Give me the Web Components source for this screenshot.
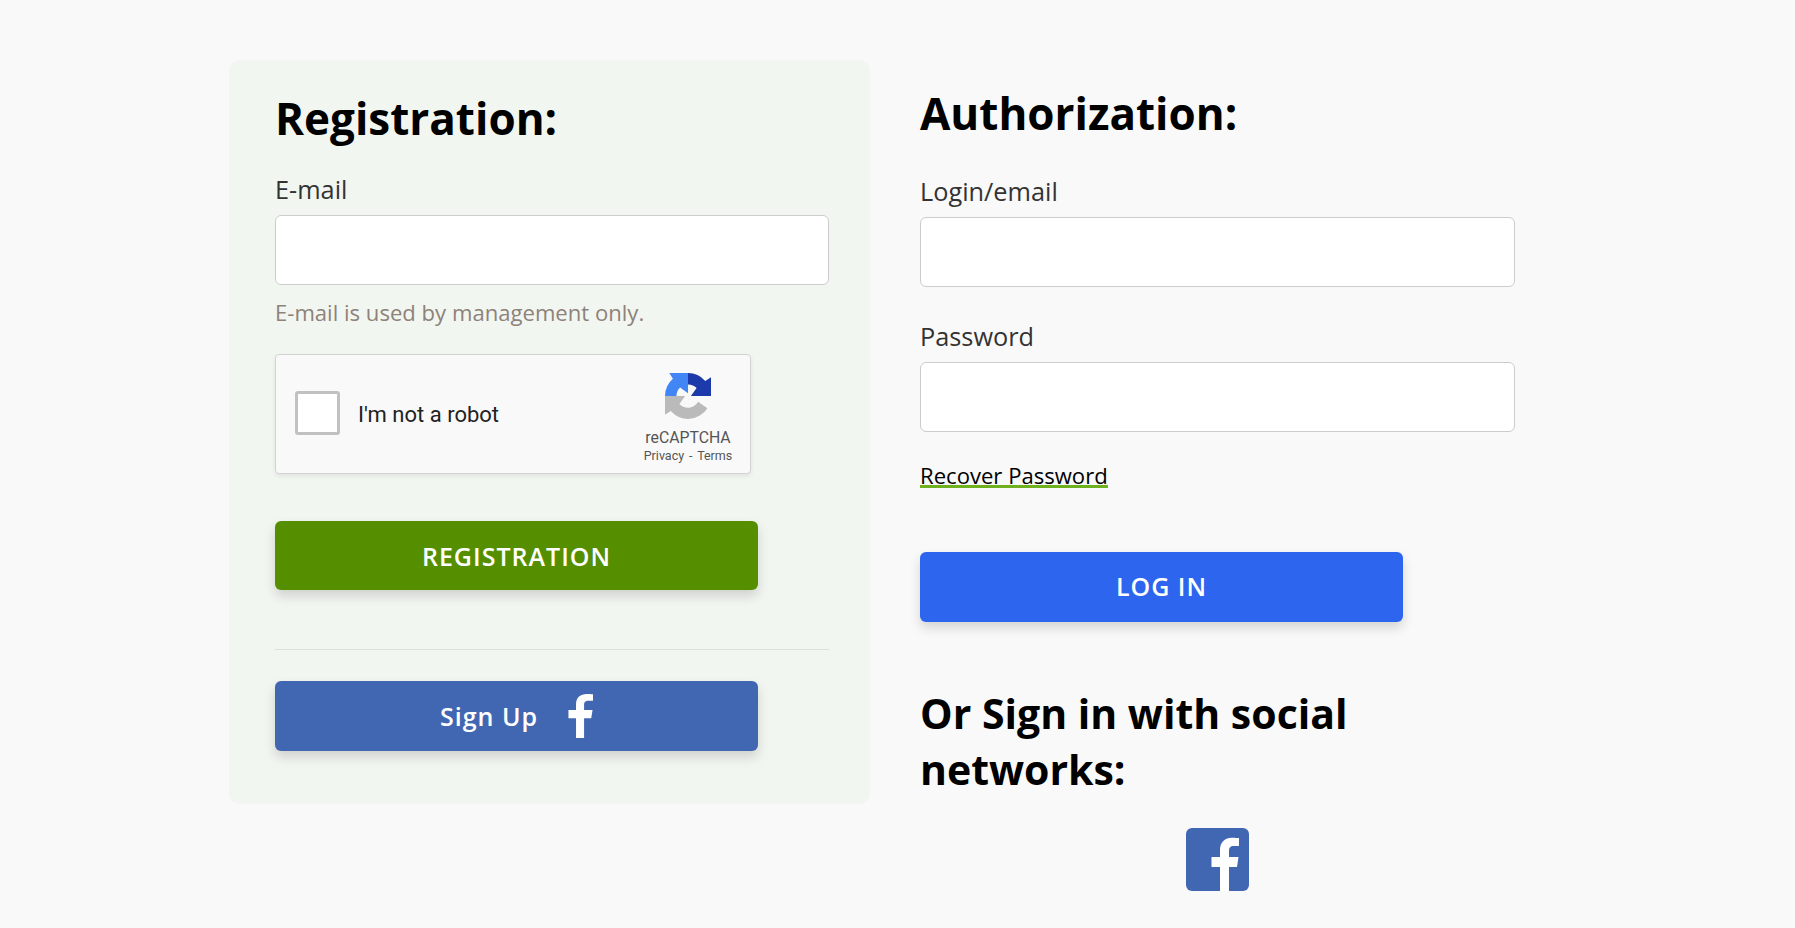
<!DOCTYPE html>
<html>
<head>
<meta charset="utf-8">
<title>Registration</title>
<style>
    html, body { margin: 0; height: 100%; }
    body { background: #f9f9f9; font-family: "Open Sans", sans-serif; overflow: hidden; }
    .reg-head { margin-top: 30px; }
    .reg-mail { margin-top: 26px; }
    .reg-captcha { margin-top: 26px; }
    .reg-send { margin-top: 47px; --nudge: 0px; }
    .reg-fb { margin-top: 31px; }
    .log-head { margin-top: 25px; }
    .log-mail { margin-top: 33px; }
    .log-pass { margin-top: 32px; }
    .log-recover { margin-top: 33px; }
    .log-send { margin-top: 63px; --nudge: 2px; }
    .log-social { margin-top: 63px; font-size: 41px; }
    .log-icons { margin-top: 31px; }
</style>
</head>
<body>

<auth-page>
    <auth-panel slot="left" tinted>
        <form-title class="reg-head">Registration:</form-title>
        <form-field class="reg-mail" label="E-mail" type="email" hint="E-mail is used by management only."></form-field>
        <re-captcha class="reg-captcha"></re-captcha>
        <form-btn class="reg-send" color="#558f00" height="69">REGISTRATION</form-btn>
        <form-line></form-line>
        <form-btn class="reg-fb" color="#4267b2" fb>Sign Up</form-btn>
    </auth-panel>
    <auth-panel slot="right">
        <form-title class="log-head">Authorization:</form-title>
        <form-field class="log-mail" label="Login/email" type="text"></form-field>
        <form-field class="log-pass" label="Password" type="password"></form-field>
        <green-link class="log-recover">Recover Password</green-link>
        <form-btn class="log-send" color="#2d65ee">LOG IN</form-btn>
        <form-title class="log-social">Or Sign in with social networks:</form-title>
        <social-icons class="log-icons"></social-icons>
    </auth-panel>
</auth-page>

<script>
// same "f" is used on the signup button and on the social square
const F_PATH = "M43 63V39H51L52.5 29H43V23C43 20 44 18 48 18H53V10C51 10 49 9.7 46 9.7C39 9.7 34 14 34 22V29H25.5V39H34V63Z";

class AuthPage extends HTMLElement {
    constructor() {
        super();
        this.attachShadow({ mode: "open" });
        this.shadowRoot.innerHTML = `
            <style>
                :host {
                    display: grid;
                    grid-template-columns: 641px 595px;
                    column-gap: 50px;
                    align-items: start;
                    padding: 60px 0 0 229px;
                }
            </style>
            <slot name="left"></slot>
            <slot name="right"></slot>
        `;
    }
}

class AuthPanel extends HTMLElement {
    constructor() {
        super();
        this.attachShadow({ mode: "open" });
        this.shadowRoot.innerHTML = `
            <style>
                :host {
                    display: block;
                    box-sizing: border-box;
                }
                :host([tinted]) {
                    height: 744px;
                    padding: 0 41px 0 46px;
                    background: #f2f6f1;
                    border-radius: 10px;
                }
            </style>
            <slot></slot>
        `;
    }
}

class FormTitle extends HTMLElement {
    constructor() {
        super();
        this.attachShadow({ mode: "open" });
        this.shadowRoot.innerHTML = `
            <style>
                :host {
                    display: block;
                    font-size: 44px;
                    line-height: 56px;
                    font-weight: 700;
                    color: #000;
                }
            </style>
            <slot></slot>
        `;
    }
}

class FormField extends HTMLElement {
    constructor() {
        super();
        this.attachShadow({ mode: "open" });
        const hint = this.getAttribute("hint");
        this.shadowRoot.innerHTML = `
            <style>
                :host { display: block; }
                label {
                    display: block;
                    font-size: 25.3px;
                    line-height: 34px;
                    color: #333;
                    margin-bottom: 9px;
                }
                input {
                    display: block;
                    box-sizing: border-box;
                    width: 100%;
                    height: 70px;
                    background: #fff;
                    border: 1px solid #ccc;
                    border-radius: 6px;
                    outline: none;
                }
                p {
                    margin: 11px 0 0;
                    font-size: 22.1px;
                    line-height: 32px;
                    color: #8e8279;
                }
            </style>
            <label>${this.getAttribute("label")}</label>
            <input type="${this.getAttribute("type")}">
            ${hint ? `<p>${hint}</p>` : ""}
        `;
    }
}

class ReCaptcha extends HTMLElement {
    constructor() {
        super();
        this.attachShadow({ mode: "open" });
        this.shadowRoot.innerHTML = `
            <style>
                :host {
                    display: flex;
                    box-sizing: border-box;
                    width: 476px;
                    height: 120px;
                    align-items: center;
                    background: #f9f9f9;
                    border: 1px solid #d3d3d3;
                    border-radius: 4px;
                    box-shadow: 0 2px 4px rgba(0, 0, 0, 0.08);
                    font-family: Roboto, sans-serif;
                    color: #555;
                }
                .box {
                    box-sizing: border-box;
                    width: 45px;
                    height: 44px;
                    margin: -2px 0 0 19px;
                    background: #fff;
                    border: 3px solid #c1c1c1;
                    border-radius: 3px;
                }
                .text {
                    flex: 1;
                    margin-left: 18px;
                    font-size: 22px;
                    color: #222;
                }
                .brand {
                    display: flex;
                    flex-direction: column;
                    align-items: center;
                    align-self: flex-start;
                    width: 100px;
                    margin: 18px 12px 0 0;
                }
                svg { display: block; width: 46px; height: 46px; margin-left: -1px; }
                .name { font-size: 15.8px; line-height: 18px; margin-top: 10px; }
                .links { font-size: 12.5px; line-height: 16px; white-space: nowrap; margin-top: 1px; word-spacing: 1.8px; }
            </style>
            <div class="box"></div>
            <div class="text">I'm not a robot</div>
            <div class="brand">
                <svg viewBox="0 0 64 64">
                    <path fill="#1c3aa9" d="M32 0A32 32 0 0 1 56 11L64 6V32H36L44 21A16 16 0 0 0 32 16Z"/>
                    <path fill="#4285f4" d="M0 32A32 32 0 0 1 11 8L6 0H32V28L21 20A16 16 0 0 0 16 32Z"/>
                    <path fill="#bababa" d="M0 32H28L20 43A16 16 0 0 0 46 40L59 49A32 32 0 0 1 8 53L0 58Z"/>
                </svg>
                <div class="name">reCAPTCHA</div>
                <div class="links">Privacy - Terms</div>
            </div>
        `;
    }
}

class FormBtn extends HTMLElement {
    constructor() {
        super();
        this.attachShadow({ mode: "open" });
        const icon = this.hasAttribute("fb")
            ? `<svg viewBox="25 9.7 28 53.3" preserveAspectRatio="none"><path fill="#fff" d="${F_PATH}"/></svg>`
            : "";
        this.shadowRoot.innerHTML = `
            <style>
                :host {
                    display: block;
                    width: 483px;
                }
                button {
                    display: flex;
                    justify-content: center;
                    align-items: center;
                    gap: 30px;
                    width: 100%;
                    height: ${this.getAttribute("height") || 70}px;
                    padding: 0 0 var(--nudge, 1px);
                    border: none;
                    border-radius: 6px;
                    background: ${this.getAttribute("color")};
                    box-shadow: 0 6px 12px rgba(0, 0, 0, 0.15);
                    color: #fff;
                    font: 600 25px "Open Sans", sans-serif;
                    letter-spacing: 1px;
                }
                svg { display: block; width: 25px; height: 44px; }
            </style>
            <button type="button"><slot></slot>${icon}</button>
        `;
    }
}

class FormLine extends HTMLElement {
    constructor() {
        super();
        this.attachShadow({ mode: "open" });
        this.shadowRoot.innerHTML = `
            <style>
                :host {
                    display: block;
                    height: 1px;
                    margin-top: 59px;
                    background: #dcdfdb;
                }
            </style>
        `;
    }
}

class GreenLink extends HTMLElement {
    constructor() {
        super();
        this.attachShadow({ mode: "open" });
        this.shadowRoot.innerHTML = `
            <style>
                :host { display: block; }
                a {
                    display: inline-block;
                    font-size: 22.1px;
                    line-height: 20px;
                    color: #000;
                    text-decoration: none;
                    border-bottom: 3px solid #6fb01e;
                }
            </style>
            <a href="#"><slot></slot></a>
        `;
    }
}

class SocialIcons extends HTMLElement {
    constructor() {
        super();
        this.attachShadow({ mode: "open" });
        this.shadowRoot.innerHTML = `
            <style>
                :host {
                    display: flex;
                    justify-content: center;
                }
                svg { display: block; width: 63px; height: 63px; }
            </style>
            <svg viewBox="0 0 63 63">
                <rect width="63" height="63" rx="6" fill="#4267b2"/>
                <path fill="#fff" d="${F_PATH}"/>
            </svg>
        `;
    }
}

customElements.define("auth-page", AuthPage);
customElements.define("auth-panel", AuthPanel);
customElements.define("form-title", FormTitle);
customElements.define("form-field", FormField);
customElements.define("re-captcha", ReCaptcha);
customElements.define("form-btn", FormBtn);
customElements.define("form-line", FormLine);
customElements.define("green-link", GreenLink);
customElements.define("social-icons", SocialIcons);
</script>
</body>
</html>
